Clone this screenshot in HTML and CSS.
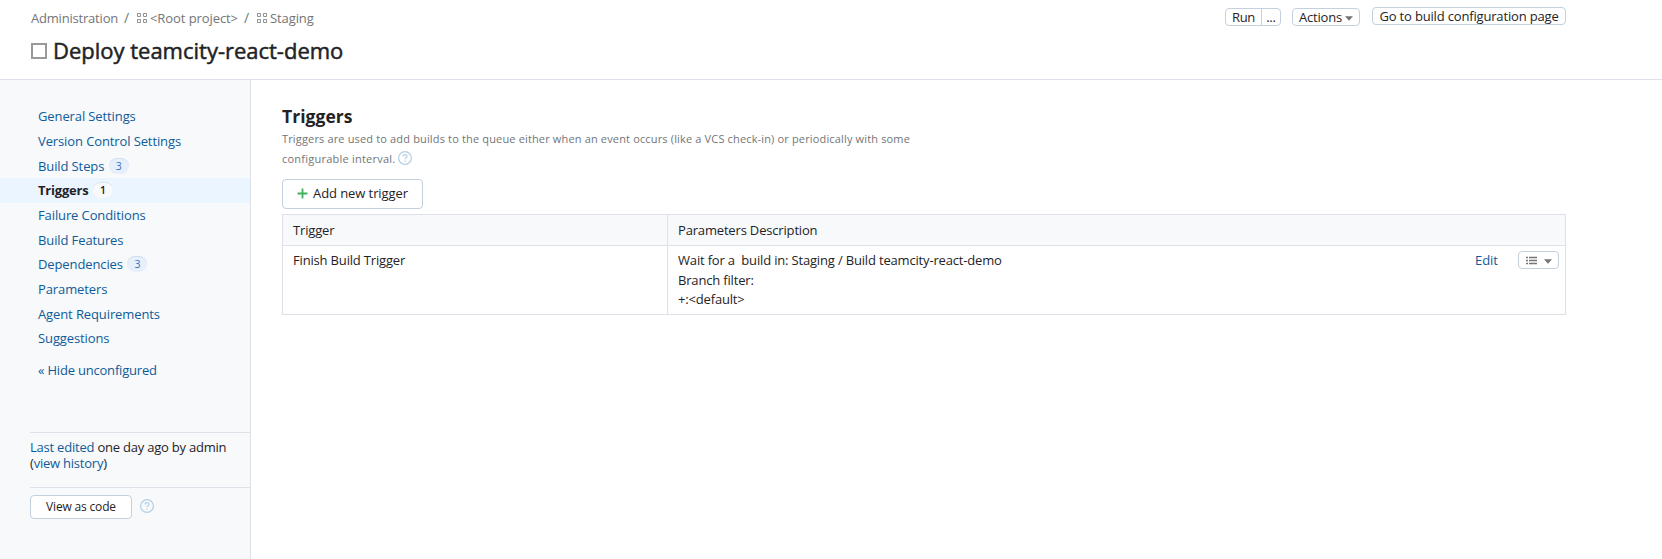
FILE: index.html
```html
<!DOCTYPE html>
<html lang="en">
<head>
<meta charset="utf-8">
<title>Deploy teamcity-react-demo</title>
<link rel="stylesheet" href="styles.css">
</head>
<body>
<header class="header">
  <div class="heading">
    <nav class="crumbs">
      <span class="crumb-admin">Administration</span><span class="slash">/</span>
      <svg class="grid-icon" width="11" height="11" viewBox="0 0 11 11"><path d="M.5.5h3v3h-3zM6.5.5h3v3h-3zM.5 6.5h3v3h-3zM6.5 6.5h3v3h-3z"/></svg>
      <span class="crumb-root">&lt;Root project&gt;</span><span class="slash">/</span>
      <svg class="grid-icon" width="11" height="11" viewBox="0 0 11 11"><path d="M.5.5h3v3h-3zM6.5.5h3v3h-3zM.5 6.5h3v3h-3zM6.5 6.5h3v3h-3z"/></svg>
      <span class="crumb-last">Staging</span>
    </nav>
    <h1 class="title"><span class="title-box"></span><span class="title-text">Deploy teamcity-react-demo</span></h1>
  </div>
  <div class="actions">
    <div class="btn-group"><button class="btn run">Run</button><button class="btn more">...</button></div>
    <button class="btn menu">Actions<svg class="arrow" width="8" height="5" viewBox="0 0 8 5"><path d="M0 .3h8L4 4.7z"/></svg></button>
    <button class="btn go">Go to build configuration page</button>
  </div>
</header>
<div class="body">
  <aside class="sidebar">
    <ul class="nav">
      <li><a>General Settings</a></li>
      <li><a>Version Control Settings</a></li>
      <li><a>Build Steps</a><span class="count">3</span></li>
      <li class="active"><a>Triggers</a><span class="count">1</span></li>
      <li><a>Failure Conditions</a></li>
      <li><a>Build Features</a></li>
      <li><a>Dependencies</a><span class="count">3</span></li>
      <li><a>Parameters</a></li>
      <li><a>Agent Requirements</a></li>
      <li><a>Suggestions</a></li>
    </ul>
    <a class="hide">« Hide unconfigured</a>
    <div class="edited"><a>Last edited</a> one day ago by admin<br>(<a>view history</a>)</div>
    <div class="code-row">
      <button class="view-code">View as code</button>
      <svg class="help" width="14" height="14" viewBox="0 0 14 14"><circle cx="7" cy="7" r="6.4"/><path d="M5 5.4C5 4.2 5.9 3.6 7 3.6s2 .6 2 1.7c0 1.4-2 1.5-2 3M7 9.4v1.3"/></svg>
    </div>
  </aside>
  <main class="main">
    <h2 class="section-title">Triggers</h2>
    <p class="desc">Triggers are used to add builds to the queue either when an event occurs (like a VCS check-in) or periodically with some<br><span class="desc-end">configurable interval.</span> <svg class="help" width="14" height="14" viewBox="0 0 14 14"><circle cx="7" cy="7" r="6.4"/><path d="M5 5.4C5 4.2 5.9 3.6 7 3.6s2 .6 2 1.7c0 1.4-2 1.5-2 3M7 9.4v1.3"/></svg></p>
    <button class="add"><svg width="11" height="11" viewBox="0 0 11 11"><path d="M5.5.5v10M.5 5.5h10" stroke="#3fb35f" stroke-width="1.8"/></svg>Add new trigger</button>
    <div class="table">
      <div class="row head"><div class="cell">Trigger</div><div class="cell">Parameters Description</div></div>
      <div class="row">
        <div class="cell">Finish Build Trigger</div>
        <div class="cell params">
          <div>Wait for a&nbsp; build in: Staging / Build teamcity-react-demo<br>Branch filter:<br>+:&lt;default&gt;</div>
          <a class="edit">Edit</a>
          <button class="btn list"><svg width="11" height="9" viewBox="0 0 11 9"><path d="M0 1.5h2M3 1.5h8M0 4.5h2M3 4.5h8M0 7.5h2M3 7.5h8" stroke="#737577" stroke-width="1.3"/></svg><svg class="arrow" width="8" height="5" viewBox="0 0 8 5"><path d="M0 .3h8L4 4.7z"/></svg></button>
        </div>
      </div>
    </div>
  </main>
</div>
</body>
</html>
```
FILE: styles.css
```css
* { box-sizing: border-box; }
body {
  margin: 0;
  height: 559px;
  display: flex;
  flex-direction: column;
  overflow: hidden;
  font: 13px/20px "Open Sans", "Noto Sans", sans-serif;
  letter-spacing: -0.17px;
  color: #1f2326;
  background: #fff;
}
a { color: #0f5b99; }
button {
  font: inherit;
  letter-spacing: inherit;
  color: inherit;
  background: #fff;
  border: 1px solid #c3d0de;
  border-radius: 4px;
  padding: 0;
  display: flex;
  align-items: center;
  white-space: nowrap;
}
.header {
  height: 80px;
  flex: none;
  display: flex;
  justify-content: space-between;
  padding: 0 96px 0 31px;
  border-bottom: 1px solid #dfe1ea;
}
.crumbs { display: flex; align-items: center; height: 20px; margin-top: 8px; color: #737577; white-space: nowrap; }
.crumb-admin { width: 87px; letter-spacing: -0.2px; }
.crumb-root { letter-spacing: -0.08px; width: 88px; margin-left: 2px; }
.crumb-last { margin-left: 2px; letter-spacing: -0.1px; }
.slash { margin: 0 7px 0 6px; width: 6px; font-size: 14px; }
.grid-icon { fill: none; stroke: #8f9193; }
.title {
  display: flex;
  align-items: center;
  margin: 8px 0 0;
  height: 30px;
  font-size: 22px;
  line-height: 28px;
  font-weight: 500;
  letter-spacing: -0.01px;
}
.title-text { padding-bottom: 2px; -webkit-text-stroke: 0.5px #1f2326; }
.title-box { width: 16px; height: 16px; border: 2px solid #999; margin-right: 6px; }
.actions { display: flex; align-items: flex-start; padding-top: 7px; }
.arrow { fill: #737577; margin-top: 2px; }
.btn { height: 18px; line-height: 16px; justify-content: center; }
.btn-group { display: flex; margin: 1px 11px 0 0; }
.run { width: 37px; letter-spacing: -0.4px; border-radius: 4px 0 0 4px; }
.more { width: 20px; margin-left: -1px; border-radius: 0 4px 4px 0; }
.menu { width: 68px; margin: 1px 12px 0 0; gap: 3px; }
.go { width: 194px; }

.body { flex: 1; display: flex; }
.sidebar { width: 251px; flex: none; background: #f7f9fb; border-right: 1px solid #dfe1ea; padding-top: 24px; }
.nav { list-style: none; margin: 0; padding: 0; letter-spacing: -0.11px; }
.nav li { height: 24.67px; padding-left: 38px; display: flex; align-items: center; }
.nav .active { background: #ebf5ff; }
.active a { font-weight: 700; color: #1f2326; letter-spacing: -0.2px; }
.count {
  width: 20px;
  height: 16px;
  margin-left: 4.5px;
  border-radius: 8px;
  border-top: 1px solid #cfdff3;
  background: #e6effa;
  color: #3574c4;
  font-size: 10.5px;
  line-height: 15px;
  text-align: center;
}
.active .count { background: #f7f9fb; border-color: #dfe5ec; color: #1f2326; font-weight: 600; }
.hide { display: block; margin: 9px 0 0 38px; letter-spacing: -0.2px; }
.edited {
  margin: 52px 0 0 30px;
  height: 55px;
  padding-top: 6px;
  line-height: 16px;
  border-top: 1px solid #dbe2ea;
  letter-spacing: -0.22px;
}
.code-row { margin-left: 30px; border-top: 1px solid #dbe2ea; padding-top: 7px; display: flex; align-items: center; gap: 8px; }
.view-code { width: 102px; height: 24px; font-size: 12px; justify-content: center; }
.help { fill: none; stroke: #b4cfe4; stroke-width: 1.2; }
.code-row .help { margin-bottom: 2px; }

.main { padding: 25px 0 0 31px; width: 1315px; }
.section-title { margin: 0; font-size: 17.5px; line-height: 22px; font-weight: 700; letter-spacing: 0.05px; }
.desc { margin: 2px 0 0; font-size: 11px; line-height: 20px; letter-spacing: 0.155px; color: #737577; }
.desc-end { letter-spacing: 0.23px; }
.desc .help { vertical-align: -2px; }
.add { width: 141px; height: 30px; margin: 10px 0 5px; padding: 0 0 2px 14px; gap: 5px; letter-spacing: -0.08px; }
.table { border: 1px solid #dfe1ea; width: 1284px; }
.row { display: grid; grid-template-columns: 384px 1fr; height: 68px; line-height: 19.5px; }
.row.head { height: 31px; background: #f7f9fb; border-bottom: 1px solid #dfe1ea; }
.cell { padding: 5px 10px 0; }
.head .cell { padding-top: 6px; }
.cell + .cell { border-left: 1px solid #dfe1ea; }
.params { display: flex; padding-right: 6px; }
.edit { margin-left: auto; letter-spacing: 0; }
.list { width: 41px; margin-left: 20px; gap: 7px; }
```
